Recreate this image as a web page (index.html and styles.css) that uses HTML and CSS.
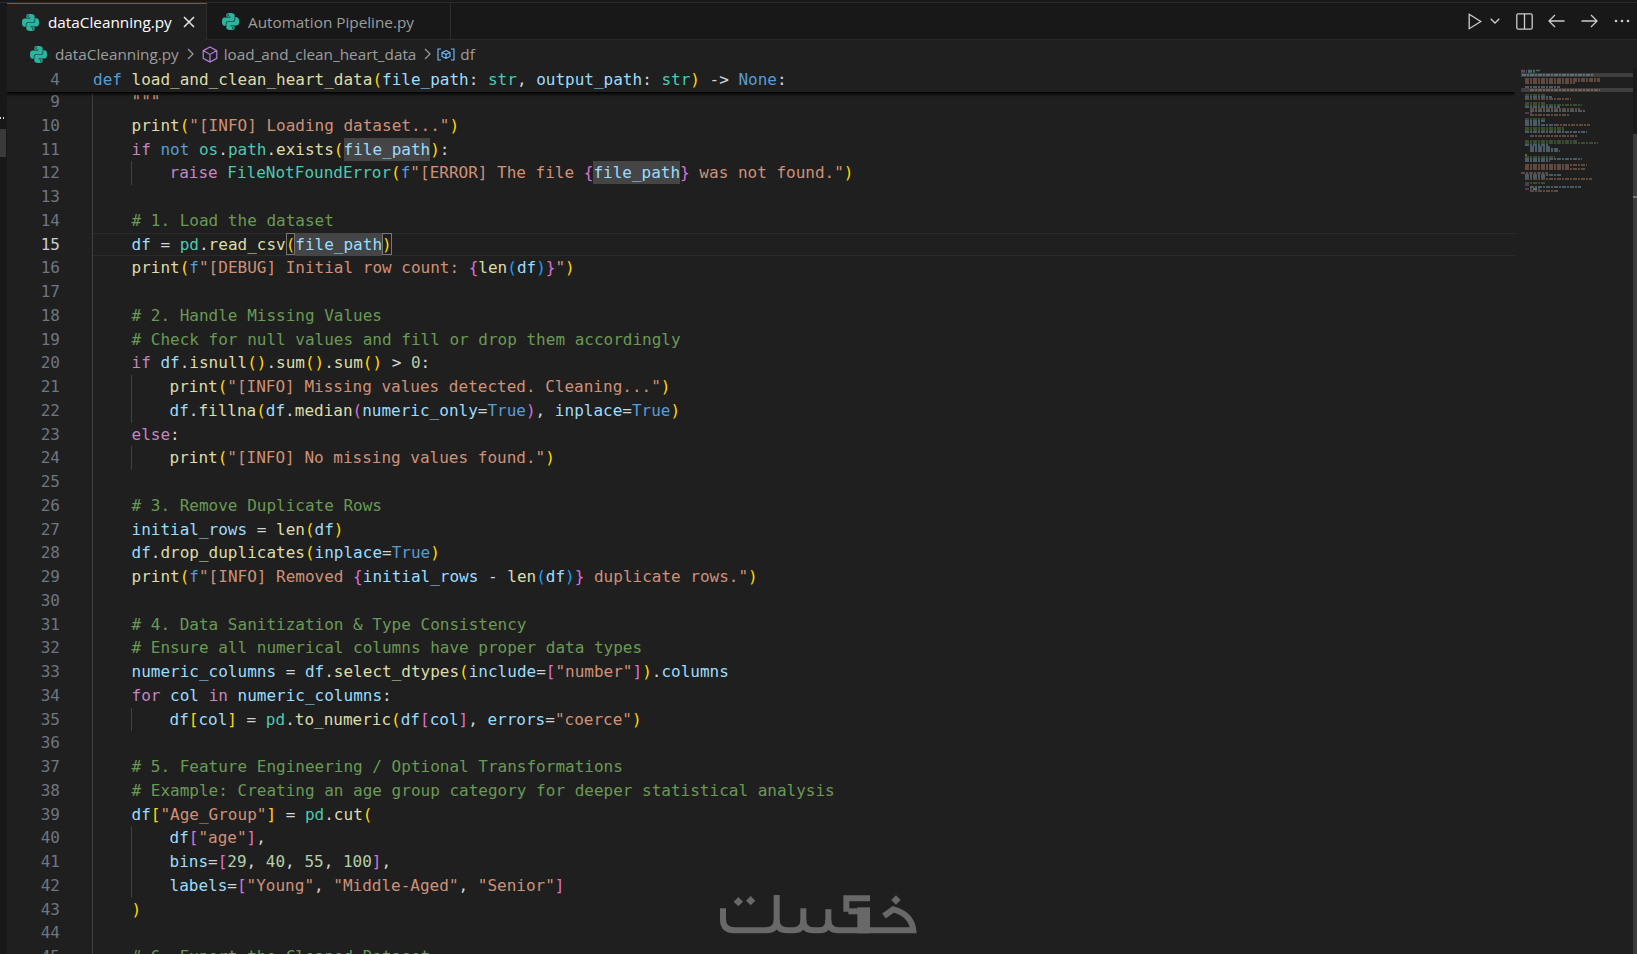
FILE: index.html
```html
<!DOCTYPE html>
<html lang="en">
<head>
<meta charset="utf-8">
<title>dataCleanning.py</title>
<link rel="stylesheet" href="styles.css">
</head>
<body>
<svg class="defs" width="0" height="0" aria-hidden="true">
  <symbol id="py" viewBox="0 0 24 24"><path d="M14.25.18l.9.2.73.26.59.3.45.32.34.34.25.34.16.33.1.3.04.26.02.2-.01.13V8.5l-.05.63-.13.55-.21.46-.26.38-.3.31-.33.25-.35.19-.35.14-.33.1-.3.07-.26.04-.21.02H8.77l-.69.05-.59.14-.5.22-.41.27-.33.32-.27.35-.2.36-.15.37-.1.35-.07.32-.04.27-.02.21v3.06H3.17l-.21-.03-.28-.07-.32-.12-.35-.18-.36-.26-.36-.36-.35-.46-.32-.59-.28-.73-.21-.88-.14-1.05-.05-1.23.06-1.22.16-1.04.24-.87.32-.71.36-.57.4-.44.42-.33.42-.24.4-.16.36-.1.32-.05.24-.01h.16l.06.01h8.16v-.83H6.18l-.01-2.75-.02-.37.05-.34.11-.31.17-.28.25-.26.31-.23.38-.2.44-.18.51-.15.58-.12.64-.1.71-.06.77-.04.84-.02 1.27.05zm-6.3 1.98l-.23.33-.08.41.08.41.23.34.33.22.41.09.41-.09.33-.22.23-.34.08-.41-.08-.41-.23-.33-.33-.22-.41-.09-.41.09zm13.09 3.95l.28.06.32.12.35.18.36.27.36.35.35.47.32.59.28.73.21.88.14 1.04.05 1.23-.06 1.23-.16 1.04-.24.86-.32.71-.36.57-.4.45-.42.33-.42.24-.4.16-.36.09-.32.05-.24.02-.16-.01h-8.22v.82h5.84l.01 2.76.02.36-.05.34-.11.31-.17.29-.25.25-.31.24-.38.2-.44.17-.51.15-.58.13-.64.09-.71.07-.77.04-.84.01-1.27-.04-1.07-.14-.9-.2-.73-.25-.59-.3-.45-.33-.34-.34-.25-.34-.16-.33-.1-.3-.04-.25-.02-.2.01-.13v-5.34l.05-.64.13-.54.21-.46.26-.38.3-.32.33-.24.35-.2.35-.14.33-.1.3-.06.26-.04.21-.02.13-.01h5.84l.69-.05.59-.14.5-.21.41-.28.33-.32.27-.35.2-.36.15-.36.1-.35.07-.32.04-.28.02-.21V6.07h2.09l.14.01zm-6.47 14.25l-.23.33-.08.41.08.41.23.33.33.23.41.08.41-.08.33-.23.23-.33.08-.41-.08-.41-.23-.33-.33-.23-.41-.08-.41.08z"/></symbol>
</svg>
<div class="topline"></div>
<div class="window">
  <aside class="rail"><span class="rail-dots"></span><span class="rail-block"></span></aside>
  <main class="main">
    <header class="tabbar">
      <div class="tab active">
        <svg class="py"><use href="#py"/></svg><span>dataCleanning.py</span>
        <svg class="close" viewBox="0 0 12 12"><path d="M1 1l10 10M11 1L1 11"/></svg>
      </div>
      <div class="tab inactive"><svg class="py"><use href="#py"/></svg><span>Automation Pipeline.py</span></div>
      <div class="actions">
        <svg class="run" viewBox="0 0 14 17"><path d="M1.2 1.3L12.8 8.5 1.2 15.7z"/></svg>
        <svg class="chev" viewBox="0 0 10 6"><path d="M.7.7L5 5 9.3.7"/></svg>
        <svg class="split" viewBox="0 0 17 17"><rect x=".8" y=".8" width="15.4" height="15.4" rx="1.5"/><path d="M8.5.8v15.4"/></svg>
        <svg class="arrow back" viewBox="0 0 17 14"><path d="M16.5 7H1M7 1L1 7l6 6"/></svg>
        <svg class="arrow" viewBox="0 0 17 14"><path d="M.5 7H16M10 1l6 6-6 6"/></svg>
        <svg class="dots" viewBox="0 0 16 4"><circle cx="2" cy="2" r="1.3"/><circle cx="8" cy="2" r="1.3"/><circle cx="14" cy="2" r="1.3"/></svg>
      </div>
    </header>
    <nav class="crumbs">
      <svg class="py"><use href="#py"/></svg><span>dataCleanning.py</span>
      <svg class="sep" viewBox="0 0 7 12"><path d="M1 1l5 5-5 5"/></svg>
      <svg class="cube" viewBox="0 0 16 17"><path d="M8 1l6.8 3.6v7.8L8 16l-6.8-3.6V4.6zM1.2 4.6L8 8.4l6.8-3.8M8 8.4V16"/></svg>
      <span>load_and_clean_heart_data</span>
      <svg class="sep near" viewBox="0 0 7 12"><path d="M1 1l5 5-5 5"/></svg>
      <svg class="varicon" viewBox="0 0 18 13"><path d="M4 1H1v11h3M14 1h3v11h-3M9 2.5l4 2v4l-4 2-4-2v-4zM5 4.5l4 2 4-2M9 6.5v4"/></svg>
      <span>df</span>
    </nav>
    <section class="editor">
      <div class="pane">
        <div class="sticky">
          <span class="num">4</span>
          <div class="stickycode"><span class="k">def</span> <span class="f">load_and_clean_heart_data</span><span class="g">(</span><span class="v">file_path</span>: <span class="t">str</span>, <span class="v">output_path</span>: <span class="t">str</span><span class="g">)</span> -&gt; <span class="k">None</span>:</div>
        </div>
        <div class="code">
          <div class="line"><span class="num">9</span><div class="src"><span class="s">    """</span></div></div>
          <div class="line"><span class="num">10</span><div class="src">    <span class="f">print</span><span class="g">(</span><span class="s">"[INFO] Loading dataset..."</span><span class="g">)</span></div></div>
          <div class="line"><span class="num">11</span><div class="src">    <span class="c">if</span> <span class="k">not</span> <span class="t">os</span>.<span class="t">path</span>.<span class="f">exists</span><span class="g">(</span><span class="v hl">file_path</span><span class="g">)</span>:</div></div>
          <div class="line"><span class="num">12</span><div class="src in"><div class="deep"><span class="c">raise</span> <span class="t">FileNotFoundError</span><span class="g">(</span><span class="k">f</span><span class="s">"[ERROR] The file </span><span class="p">{</span><span class="v hl">file_path</span><span class="p">}</span><span class="s"> was not found."</span><span class="g">)</span></div></div></div>
          <div class="line"><span class="num">13</span><div class="src"> </div></div>
          <div class="line"><span class="num">14</span><div class="src"><span class="m">    # 1. Load the dataset</span></div></div>
          <div class="line current"><span class="num">15</span><div class="src">    <span class="v">df</span> = <span class="t">pd</span>.<span class="f">read_csv</span><span class="g box">(</span><span class="v hl">file_path</span><span class="g box">)</span></div></div>
          <div class="line"><span class="num">16</span><div class="src">    <span class="f">print</span><span class="g">(</span><span class="k">f</span><span class="s">"[DEBUG] Initial row count: </span><span class="p">{</span><span class="f">len</span><span class="b">(</span><span class="v">df</span><span class="b">)</span><span class="p">}</span><span class="s">"</span><span class="g">)</span></div></div>
          <div class="line"><span class="num">17</span><div class="src"> </div></div>
          <div class="line"><span class="num">18</span><div class="src"><span class="m">    # 2. Handle Missing Values</span></div></div>
          <div class="line"><span class="num">19</span><div class="src"><span class="m">    # Check for null values and fill or drop them accordingly</span></div></div>
          <div class="line"><span class="num">20</span><div class="src">    <span class="c">if</span> <span class="v">df</span>.<span class="f">isnull</span><span class="g">()</span>.<span class="f">sum</span><span class="g">()</span>.<span class="f">sum</span><span class="g">()</span> &gt; <span class="n">0</span>:</div></div>
          <div class="line"><span class="num">21</span><div class="src in"><div class="deep"><span class="f">print</span><span class="g">(</span><span class="s">"[INFO] Missing values detected. Cleaning..."</span><span class="g">)</span></div></div></div>
          <div class="line"><span class="num">22</span><div class="src in"><div class="deep"><span class="v">df</span>.<span class="f">fillna</span><span class="g">(</span><span class="v">df</span>.<span class="f">median</span><span class="p">(</span><span class="v">numeric_only</span>=<span class="k">True</span><span class="p">)</span>, <span class="v">inplace</span>=<span class="k">True</span><span class="g">)</span></div></div></div>
          <div class="line"><span class="num">23</span><div class="src">    <span class="c">else</span>:</div></div>
          <div class="line"><span class="num">24</span><div class="src in"><div class="deep"><span class="f">print</span><span class="g">(</span><span class="s">"[INFO] No missing values found."</span><span class="g">)</span></div></div></div>
          <div class="line"><span class="num">25</span><div class="src"> </div></div>
          <div class="line"><span class="num">26</span><div class="src"><span class="m">    # 3. Remove Duplicate Rows</span></div></div>
          <div class="line"><span class="num">27</span><div class="src">    <span class="v">initial_rows</span> = <span class="f">len</span><span class="g">(</span><span class="v">df</span><span class="g">)</span></div></div>
          <div class="line"><span class="num">28</span><div class="src">    <span class="v">df</span>.<span class="f">drop_duplicates</span><span class="g">(</span><span class="v">inplace</span>=<span class="k">True</span><span class="g">)</span></div></div>
          <div class="line"><span class="num">29</span><div class="src">    <span class="f">print</span><span class="g">(</span><span class="k">f</span><span class="s">"[INFO] Removed </span><span class="p">{</span><span class="v">initial_rows</span> - <span class="f">len</span><span class="b">(</span><span class="v">df</span><span class="b">)</span><span class="p">}</span><span class="s"> duplicate rows."</span><span class="g">)</span></div></div>
          <div class="line"><span class="num">30</span><div class="src"> </div></div>
          <div class="line"><span class="num">31</span><div class="src"><span class="m">    # 4. Data Sanitization &amp; Type Consistency</span></div></div>
          <div class="line"><span class="num">32</span><div class="src"><span class="m">    # Ensure all numerical columns have proper data types</span></div></div>
          <div class="line"><span class="num">33</span><div class="src">    <span class="v">numeric_columns</span> = <span class="v">df</span>.<span class="f">select_dtypes</span><span class="g">(</span><span class="v">include</span>=<span class="p">[</span><span class="s">"number"</span><span class="p">]</span><span class="g">)</span>.<span class="v">columns</span></div></div>
          <div class="line"><span class="num">34</span><div class="src">    <span class="c">for</span> <span class="v">col</span> <span class="c">in</span> <span class="v">numeric_columns</span>:</div></div>
          <div class="line"><span class="num">35</span><div class="src in"><div class="deep"><span class="v">df</span><span class="g">[</span><span class="v">col</span><span class="g">]</span> = <span class="t">pd</span>.<span class="f">to_numeric</span><span class="g">(</span><span class="v">df</span><span class="p">[</span><span class="v">col</span><span class="p">]</span>, <span class="v">errors</span>=<span class="s">"coerce"</span><span class="g">)</span></div></div></div>
          <div class="line"><span class="num">36</span><div class="src"> </div></div>
          <div class="line"><span class="num">37</span><div class="src"><span class="m">    # 5. Feature Engineering / Optional Transformations</span></div></div>
          <div class="line"><span class="num">38</span><div class="src"><span class="m">    # Example: Creating an age group category for deeper statistical analysis</span></div></div>
          <div class="line"><span class="num">39</span><div class="src">    <span class="v">df</span><span class="g">[</span><span class="s">"Age_Group"</span><span class="g">]</span> = <span class="t">pd</span>.<span class="f">cut</span><span class="g">(</span></div></div>
          <div class="line"><span class="num">40</span><div class="src in"><div class="deep"><span class="v">df</span><span class="p">[</span><span class="s">"age"</span><span class="p">]</span>,</div></div></div>
          <div class="line"><span class="num">41</span><div class="src in"><div class="deep"><span class="v">bins</span>=<span class="p">[</span><span class="n">29</span>, <span class="n">40</span>, <span class="n">55</span>, <span class="n">100</span><span class="p">]</span>,</div></div></div>
          <div class="line"><span class="num">42</span><div class="src in"><div class="deep"><span class="v">labels</span>=<span class="p">[</span><span class="s">"Young"</span>, <span class="s">"Middle-Aged"</span>, <span class="s">"Senior"</span><span class="p">]</span></div></div></div>
          <div class="line"><span class="num">43</span><div class="src">    <span class="g">)</span></div></div>
          <div class="line"><span class="num">44</span><div class="src"> </div></div>
          <div class="line"><span class="num">45</span><div class="src"><span class="m">    # 6. Export the Cleaned Dataset</span></div></div>
        </div>
      </div>
      <aside class="minimap">
        <svg class="mm" width="118" height="140" viewBox="1515 68 118 140">
          <path class="mm-bar" d="M1521 75h112M1521 90h112"/>
          <path class="mm-pu" d="M1521 70.5h6M1521 72h6M1525 113h8M1525 185h5M1525 189h15"/>
          <path class="mm-te" d="M1528 70.5h12M1528 72h8M1533 189h5"/>
          <path class="mm-bl" d="M1522 75h71M1525 87h35M1525 97h27M1525 107h35M1530 111h55M1525 121h20M1525 123h15M1525 125h30M1525 132h62M1525 145h23M1530 147h20M1530 149h28M1530 151h30M1525 159h57M1525 161h25M1525 175h36M1525 177h20M1530 187h51"/>
          <path class="mm-or" d="M1525 79h75M1525 81h75M1525 83h50M1530 90h70M1530 109h50M1530 115h39M1525 99h46M1555 125h35M1530 136h48M1525 165h62M1525 167h45M1525 169h60M1525 179h67M1530 191h29M1521 173h27"/>
          <path class="mm-gr" d="M1525 95h20M1525 103h20M1525 105h57M1525 119h20M1525 128h40M1525 130h40M1525 141h52M1525 143h73M1525 157h30M1525 183h20"/>
          <path class="mm-go" d="M1525 155h2"/>
        </svg>
        <div class="scroll"><span class="thumb"></span><span class="mark"></span></div>
      </aside>
    </section>
  </main>
</div>
<svg class="logo" viewBox="0 0 780 252" aria-label="logo">
  <path d="M129 115V148Q129 181 163 181H258Q290 181 290 150V75"/>
  <path d="M290 150Q290 181 322 181H340Q370 181 370 150V115"/>
  <path d="M370 150Q370 181 400 181H420Q445 181 445 150V118"/>
  <path d="M445 150Q445 181 475 181H700Q694 132 640 118L612 138"/>
  <path class="five" d="M490 85H570M499 85V125"/>
  <path class="five-col" d="M551 112V190"/>
  <path class="five" d="M505 124H560"/>
  <path class="dot" d="M175 81l14 14-14 14-14-14zM212 78l14 14-14 14-14-14zM648 76l14 14-14 14-14-14z"/>
</svg>
</body>
</html>
```
FILE: styles.css
```css
* { box-sizing: border-box; }
html, body { height: 100%; }
body {
  margin: 0;
  background: #181818;
  overflow: hidden;
  display: flex;
  flex-direction: column;
  height: 954px;
  position: relative;
  font-family: "Open Sans", "Noto Sans", sans-serif;
}
.defs { position: absolute; }
.topline { height: 3px; flex: none; border-bottom: 1px solid #2b2b2b; }
.window { flex: 1; display: flex; min-height: 0; }
.rail {
  width: 7px; flex: none; background: #181818;
  display: flex; flex-direction: column; padding-top: 114px;
}
.rail-dots { height: 2px; width: 6px; margin-bottom: 10px; background: repeating-linear-gradient(90deg, #ddd 0 1px, transparent 1px 3px); }
.rail-block { height: 28px; width: 6px; background: #3a3a3a; }
.main { flex: 1; display: flex; flex-direction: column; min-width: 0; }
.tabbar {
  height: 37px; flex: none; display: flex; align-items: stretch;
  background: #181818; border-bottom: 1px solid #2b2b2b;
  font-size: 15.3px;
}
.tab { display: flex; align-items: center; border-right: 1px solid #2b2b2b; margin-bottom: -1px; }
.tab.active { width: 200px; padding-left: 15px; background: #1f1f1f; color: #fff; border-top: 1px solid #0078d4; }
.tab.inactive { width: 244px; padding-left: 15px; color: #9d9d9d; }
.py { width: 17px; height: 17px; fill: #2bb5a0; flex: none; margin-right: 9px; }
.close { width: 12px; height: 12px; margin-left: 11px; fill: none; stroke: #e6e6e6; stroke-width: 1.5; }
.actions { margin-left: auto; display: flex; align-items: center; padding-right: 7px; }
.actions svg { fill: none; stroke: #cccccc; stroke-width: 1.3; flex: none; }
.run { width: 14px; height: 17px; }
.chev { width: 10px; height: 6px; margin-left: 8px; }
.split { width: 17px; height: 17px; margin-left: 16px; }
.arrow { width: 17px; height: 14px; margin-left: 16px; }
.arrow.back { margin-left: 15px; }
.actions .dots { width: 16px; height: 4px; margin-left: 16px; fill: #ccc; stroke: none; }
.crumbs {
  height: 28px; flex: none; display: flex; align-items: center;
  background: #1f1f1f; color: #9d9d9d; font-size: 15.3px; padding-left: 23px;
}
.crumbs .py { margin-right: 8px; }
.sep { width: 7px; height: 12px; margin: 0 8px; fill: none; stroke: #9d9d9d; stroke-width: 1.2; }
.sep.near { margin-right: 6px; }
.cube { width: 16px; height: 17px; margin-right: 6px; fill: none; stroke: #b180d7; stroke-width: 1.2; }
.varicon { width: 18px; height: 13px; margin-right: 5px; fill: none; stroke: #75beff; stroke-width: 1.1; }
.editor { flex: 1; min-height: 0; display: flex; background: #1f1f1f; }
.pane {
  flex: 1; min-width: 0; position: relative; overflow: hidden;
  font-family: "DejaVu Sans Mono", "Liberation Mono", monospace;
  font-size: 16px; line-height: 23.75px; color: #d4d4d4;
}
.sticky {
  position: absolute; top: 0; left: 0; right: 0; height: 24px; z-index: 2;
  background: #1f1f1f; display: flex; box-shadow: 0 2px 3px #000;
}
.stickycode { white-space: pre; }
.code { padding-top: 22px; }
.line { display: flex; height: 23.75px; }
.num { width: 53px; flex: none; margin-right: 33px; text-align: right; color: #6e7681; }
.line .num { margin-right: 32px; }
.current .num { color: #cccccc; }
.src { flex: 1; border-left: 1px solid #404040; white-space: pre; }
.current .src { box-shadow: inset 0 1px 0 #2b2b2b, inset 0 -1px 0 #2b2b2b; }
.in { padding-left: 38px; }
.deep { border-left: 1px solid #404040; padding-left: 37.5px; height: 100%; }
.k { color: #569cd6; }
.c { color: #c586c0; }
.f { color: #dcdcaa; }
.v { color: #9cdcfe; }
.t { color: #4ec9b0; }
.s { color: #ce9178; }
.m { color: #6a9955; }
.n { color: #b5cea8; }
.g { color: #ffd700; }
.p { color: #da70d6; }
.b { color: #179fff; }
.hl { background: #454545; display: inline-block; height: 23px; }
.box { display: inline-block; height: 22px; outline: 1px solid #777; outline-offset: -1px; }
.minimap { width: 122px; flex: none; position: relative; display: flex; }
.mm { flex: none; }
.mm path { fill: none; stroke-width: 1.4; opacity: .5; stroke-dasharray: 4 1 2 1; }
.mm .mm-bar { stroke: #3f3f3f; stroke-width: 4; opacity: 1; stroke-dasharray: none; }
.mm-pu { stroke: #a56ea8; }
.mm-te { stroke: #4ec9b0; }
.mm-bl { stroke: #8fbfd8; }
.mm-or { stroke: #ce9178; }
.mm-gr { stroke: #6a9955; }
.mm-go { stroke: #ffd700; }
.scroll { width: 4px; flex: none; position: relative; background: #1a1a1a; margin-left: auto; }
.thumb { position: absolute; top: 66px; left: 0; right: 0; bottom: 0; background: #3c3c3c; }
.mark { position: absolute; top: 128px; left: 0; right: 0; height: 2px; background: #777; }
.logo {
  position: absolute; left: 680px; top: 870px; width: 260px; height: 84px;
  fill: none; stroke: #686868; stroke-width: 18;
}
.logo .dot { fill: #686868; stroke: none; }
.logo .five-col { stroke-width: 38; }
```
